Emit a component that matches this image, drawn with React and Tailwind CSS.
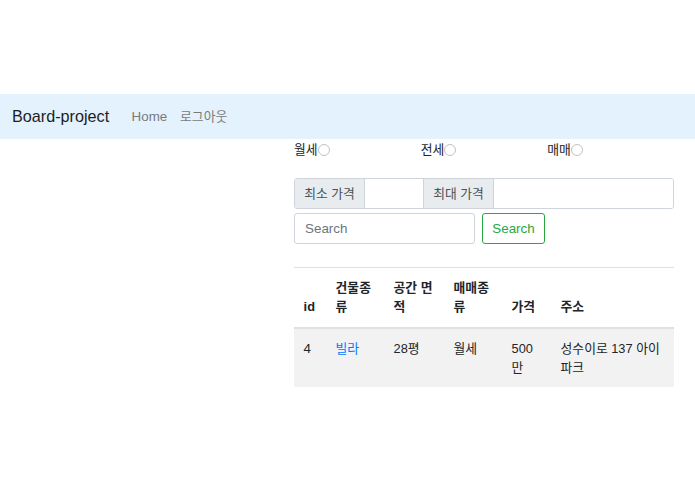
import React from "react";

const font = { fontFamily: '"Liberation Sans", "Noto Sans CJK KR", sans-serif' };

function Radio({ label }) {
  return (
    <div className="flex-1 flex items-center">
      <span>{label}</span>
      <span className="inline-block w-[12px] h-[12px] rounded-full border border-[#c2c2c2] bg-white"></span>
    </div>
  );
}

export default function App() {
  return (
    <div style={font} className="w-[695px] h-[494px] bg-white text-[12.8px] leading-[19.2px] text-[#212529]">
      <div className="h-[94px]"></div>
      <nav className="h-[45px] bg-[#e3f2fd] flex items-center px-[12px]">
        <span className="text-[16.2px] text-[#1d1d1d] mr-[16px]">Board-project</span>
        <span className="px-[6.4px] text-[#7a7a7a] text-[13.4px]">Home</span>
        <span className="px-[6.4px] text-[#7a7a7a]">로그아웃</span>
      </nav>
      <div className="ml-[294px] w-[380px]">
        <div className="flex pt-[1px]">
          <Radio label="월세" />
          <Radio label="전세" />
          <Radio label="매매" />
        </div>
        <div className="mt-[19px] flex h-[31px] rounded-[3px] border border-[#ced4da] overflow-hidden">
          <div className="w-[70px] bg-[#e9ecef] text-[#495057] flex items-center justify-center border-r border-[#ced4da]">최소 가격</div>
          <div className="w-[59px] bg-white border-r border-[#ced4da]"></div>
          <div className="w-[70px] bg-[#e9ecef] text-[#495057] flex items-center justify-center border-r border-[#ced4da]">최대 가격</div>
          <div className="flex-1 bg-white"></div>
        </div>
        <div className="mt-[4px] flex gap-[7px]">
          <div className="w-[181px] h-[31px] rounded-[3px] border border-[#ced4da] flex items-center px-[10px] text-[#6c757d] text-[13.4px]">Search</div>
          <div className="w-[63px] h-[31px] rounded-[3px] border border-[#28a745] flex items-center justify-center text-[#28a745] text-[13.4px]">Search</div>
        </div>
        <table className="mt-[23px] w-[380px] table-fixed border-collapse">
          <colgroup>
            <col className="w-[32px]" />
            <col className="w-[58px]" />
            <col className="w-[60px]" />
            <col className="w-[58px]" />
            <col className="w-[49px]" />
            <col className="w-[123px]" />
          </colgroup>
          <thead>
            <tr className="border-t border-[#dee2e6] border-b-2 border-b-[#dee2e6]">
              {["id", "건물종류", "공간 면적", "매매종류", "가격", "주소"].map((h) => (
                <th key={h} className="px-[9.6px] pt-[10px] pb-[10px] align-bottom text-left font-bold">{h}</th>
              ))}
            </tr>
          </thead>
          <tbody>
            <tr className="bg-[#f2f2f2]">
              <td className="px-[9.6px] pt-[10px] pb-[10px] align-top text-[13.4px]">4</td>
              <td className="px-[9.6px] pt-[10px] pb-[10px] align-top text-[#007bff]">빌라</td>
              <td className="px-[9.6px] pt-[10px] pb-[10px] align-top">28평</td>
              <td className="px-[9.6px] pt-[10px] pb-[10px] align-top">월세</td>
              <td className="px-[9.6px] pt-[10px] pb-[10px] align-top">500 만</td>
              <td className="px-[9.6px] pt-[10px] pb-[10px] align-top">성수이로 137 아이파크</td>
            </tr>
          </tbody>
        </table>
      </div>
    </div>
  );
}
